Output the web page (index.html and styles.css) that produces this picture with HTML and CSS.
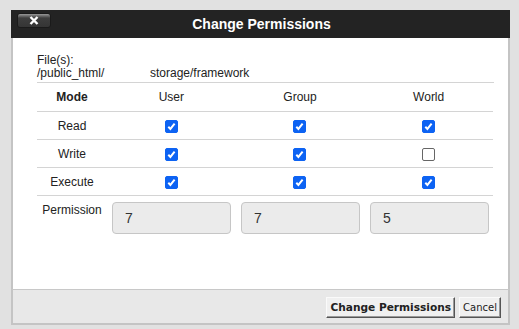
FILE: index.html
```html
<!DOCTYPE html>
<html>
<head>
<meta charset="utf-8">
<link rel="stylesheet" href="styles.css">
</head>
<body>
<div class="dialog">
  <div class="titlebar">
    <button class="close" type="button"><svg width="10" height="9" viewBox="0 0 10 9"><path d="M1.5 1 L8.5 8 M8.5 1 L1.5 8" stroke="#fff" stroke-width="2.4"/></svg></button>
    <span class="title">Change Permissions</span>
  </div>
  <div class="body">
    <div class="files">
      <div>File(s):</div>
      <div class="path"><span class="dir">/public_html/</span><span>storage/framework</span></div>
    </div>
    <table class="perms">
      <thead>
        <tr><th class="mode">Mode</th><th>User</th><th>Group</th><th>World</th></tr>
      </thead>
      <tbody>
        <tr><td class="mode">Read</td><td><input type="checkbox" checked></td><td><input type="checkbox" checked></td><td><input type="checkbox" checked></td></tr>
        <tr><td class="mode">Write</td><td><input type="checkbox" checked></td><td><input type="checkbox" checked></td><td><input type="checkbox"></td></tr>
        <tr><td class="mode">Execute</td><td><input type="checkbox" checked></td><td><input type="checkbox" checked></td><td><input type="checkbox" checked></td></tr>
      </tbody>
    </table>
    <div class="octal">
      <div class="octal-label">Permission</div>
      <div class="octal-inputs">
        <input class="num" type="text" value="7" readonly>
        <input class="num" type="text" value="7" readonly>
        <input class="num" type="text" value="5" readonly>
      </div>
    </div>
  </div>
  <div class="footer">
    <button class="btn primary" type="button">Change Permissions</button>
    <button class="btn" type="button">Cancel</button>
  </div>
</div>
</body>
</html>
```
FILE: styles.css
```css
html, body {
  margin: 0;
  padding: 0;
  background: #e1e1e1;
  font-family: "Liberation Sans", Arial, sans-serif;
  color: #222;
}
body {
  padding: 10px 9px 4px 11px;
  width: 499px;
}
.dialog {
  width: 499px;
  display: flex;
  flex-direction: column;
}
.titlebar {
  height: 28px;
  background: #232323;
  position: relative;
  display: flex;
  align-items: center;
  justify-content: center;
}
.title {
  color: #fff;
  font-weight: bold;
  font-size: 14px;
  padding-left: 2px;
}
.close {
  position: absolute;
  left: 6px;
  top: 3px;
  width: 34px;
  height: 15px;
  padding: 0;
  border: 1px solid #1a1a1a;
  border-radius: 3px;
  background: linear-gradient(#9a9a9a 0, #6a6a6a 2px, #3e3e3e 4px, #353535 100%);
  display: flex;
  align-items: center;
  justify-content: center;
}
.close svg { display: block; }
.body {
  background: #fff;
  border-left: 2px solid #c4c4c4;
  border-right: 2px solid #c4c4c4;
  padding: 16px 14px 0 24px;
  height: 235px;
  font-size: 12px;
}
.files {
  line-height: 13px;
  padding-bottom: 2px;
  border-bottom: 1px solid #d4d4d4;
}
.path { display: flex; }
.dir { width: 113px; }
.perms {
  width: 456px;
  border-collapse: collapse;
  table-layout: fixed;
}
.perms th, .perms td {
  height: 27px;
  padding: 0;
  text-align: center;
  border-bottom: 1px solid #d4d4d4;
  font-size: 12px;
  font-weight: normal;
  vertical-align: middle;
}
.perms thead th { height: 28px; }
.perms th.mode { font-weight: bold; width: 70px; }
.perms td.mode { width: 70px; }
.perms input {
  appearance: none;
  -webkit-appearance: none;
  width: 13px;
  height: 13px;
  margin: 1px 0 0 0;
  border: 1px solid #666;
  border-radius: 2px;
  background: #fff;
  vertical-align: middle;
}
.perms input:checked {
  border-color: #0d63f3;
  background: #0d63f3 url("data:image/svg+xml;utf8,<svg xmlns='http://www.w3.org/2000/svg' width='13' height='13' viewBox='0 0 13 13'><path d='M3.3 6.7 L5.4 8.9 L9.6 3.7' fill='none' stroke='white' stroke-width='2'/></svg>") center/13px 13px no-repeat;
}
.octal {
  display: flex;
  padding-top: 6px;
}
.octal-label {
  width: 70px;
  text-align: center;
  padding-top: 1px;
}
.octal-inputs {
  display: flex;
  gap: 10px;
  margin-left: 5px;
}
.num {
  width: 119px;
  height: 32px;
  box-sizing: border-box;
  border: 1px solid #c6c6c6;
  border-radius: 4px;
  background: #ebebeb;
  font-family: "Liberation Sans", Arial, sans-serif;
  font-size: 14px;
  color: #333;
  padding: 0 12px;
  margin: 0;
  outline: none;
}
.footer {
  background: #e8e8e8;
  border: 2px solid #c4c4c4;
  border-top: 1px solid #c8c8c8;
  height: 33px;
  display: flex;
  justify-content: flex-end;
  align-items: center;
  gap: 4px;
  padding-right: 7px;
}
.btn {
  height: 21px;
  margin-top: 1px;
  padding: 0 3px;
  background: #f0f0f0;
  border: 1px solid;
  border-color: #fafafa #555 #555 #fafafa;
  box-shadow: inset -1px -1px 0 #999;
  font-family: "DejaVu Sans", Verdana, sans-serif;
  font-size: 10px;
  color: #222;
}
.btn.primary { font-weight: bold; font-size: 10.6px; }
```
